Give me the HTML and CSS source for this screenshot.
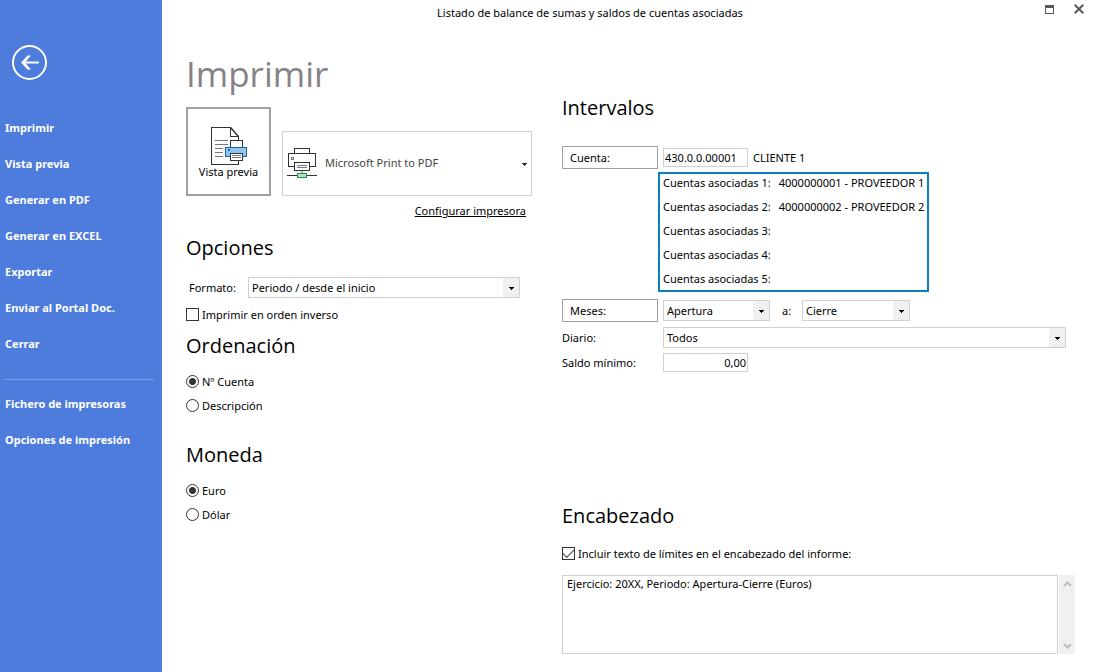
FILE: index.html
```html
<!DOCTYPE html>
<html lang="es">
<head>
<meta charset="utf-8">
<title>Listado de balance de sumas y saldos de cuentas asociadas</title>
<link rel="stylesheet" href="styles.css">
</head>
<body>
<div class="window">
  <aside class="sidebar">
    <button class="back" type="button" aria-label="Volver">
      <svg width="36" height="36" viewBox="0 0 36 36" fill="none" stroke="#fff">
        <circle cx="17.500" cy="17.500" r="16.500" stroke-width="2"/>
        <path d="M10 17.500H27" stroke-width="2"/>
        <path d="M9 17.500L15.500 10.500H19L12.800 17.500L19 24.500H15.500Z" fill="#fff" stroke="none"/>
      </svg>
    </button>
    <nav class="menu">
      <a href="#">Imprimir</a>
      <a href="#">Vista previa</a>
      <a href="#">Generar en PDF</a>
      <a href="#">Generar en EXCEL</a>
      <a href="#">Exportar</a>
      <a href="#">Enviar al Portal Doc.</a>
      <a href="#">Cerrar</a>
      <hr>
      <a href="#">Fichero de impresoras</a>
      <a href="#">Opciones de impresión</a>
    </nav>
  </aside>
  <div class="main">
    <header class="titlebar">
      <span class="title">Listado de balance de sumas y saldos de cuentas asociadas</span>
      <div class="window-buttons">
        <button type="button" aria-label="Maximizar">
          <svg width="9" height="9" viewBox="0 0 9 9" shape-rendering="crispEdges"><path d="M0 0H9V9H0ZM1 3V8H8V3Z" fill="#58585a" fill-rule="evenodd"/></svg>
        </button>
        <button type="button" aria-label="Cerrar ventana">
          <svg width="10" height="10" viewBox="0 0 10 10" fill="none" stroke="#58585a" stroke-width="2"><path d="M.7 .7L9.3 9.3M9.3 .7L.7 9.3"/></svg>
        </button>
      </div>
    </header>
    <main class="content">
      <section class="left">
        <h1>Imprimir</h1>
        <div class="print-row">
          <button class="preview" type="button">
            <svg width="36" height="38" viewBox="0 0 36 38" fill="none" shape-rendering="crispEdges">
              <path d="M27.5 34V37.500H.5V.5H19.500L27.500 9.500V14" fill="#fff"/>
              <path d="M27.500 34V37.500H.5V.5H19.500V9.500H27.500V13" stroke="#333"/>
              <path d="M19.500 .5L27.500 9.500" stroke="#333" stroke-width="1.500" shape-rendering="auto"/>
              <path d="M4 13.5H17M4 17.5H17M4 21.5H12M4 25.5H12M4 29.5H12" stroke="#777"/>
              <path d="M19.5 20V13.5H31.5V20" fill="#fff" stroke="#333"/>
              <path d="M14.5 20.5H35.5V29.5H14.5Z" fill="#8fc5ee" stroke="#1166ae"/>
              <path d="M17 22H19V24H17Z" fill="#1166ae"/>
              <path d="M19.5 26.5H31.5V33.5H19.5Z" fill="#fff" stroke="#333"/>
              <path d="M21 28.5H30M21 30.5H30" stroke="#777"/>
            </svg>
            <span>Vista previa</span>
          </button>
          <div class="printer">
            <svg width="30" height="30" viewBox="0 0 30 30" fill="none" shape-rendering="crispEdges">
              <path d="M7.5 6V.5H22.5V6" stroke="#333"/>
              <path d="M7 18.5H1.5V5.5H28.5V18.5H23" stroke="#333"/>
              <path d="M4.5 9.5H6.5V11.5H4.5Z" stroke="#777"/>
              <path d="M7.5 14.5H22.5V22.5H7.5Z" fill="#fff" stroke="#333"/>
              <path d="M10 17.5H20M10 19.5H20" stroke="#777"/>
              <path d="M15 23V25" stroke="#aaa" stroke-width="2"/>
              <path d="M0 27.5H30" stroke="#333"/>
              <path d="M10.5 25.5H19.5V29.5H10.5Z" fill="#b9dfc0" stroke="#159947"/>
            </svg>
            <select aria-label="Impresora"><option>Microsoft Print to PDF</option></select>
            <svg class="caret" width="5" height="3" viewBox="0 0 5 3" shape-rendering="crispEdges"><path d="M0 0H5V1H4V2H3V3H2V2H1V1H0Z" fill="#333"/></svg>
          </div>
        </div>
        <a class="configure" href="#">Configurar impresora</a>

        <h2>Opciones</h2>
        <div class="format-row">
          <label for="formato">Formato:</label>
          <span class="combo">
            <select id="formato"><option>Periodo / desde el inicio</option></select>
            <svg class="caret" width="5" height="3" viewBox="0 0 5 3" shape-rendering="crispEdges"><path d="M0 0H5V1H4V2H3V3H2V2H1V1H0Z"/></svg>
          </span>
        </div>
        <label class="choice reverse"><input type="checkbox">Imprimir en orden inverso</label>

        <h2>Ordenación</h2>
        <div class="choices" role="radiogroup" aria-label="Ordenación">
          <label class="choice"><input type="radio" name="orden" checked>Nº Cuenta</label>
          <label class="choice"><input type="radio" name="orden">Descripción</label>
        </div>

        <h2 class="spaced">Moneda</h2>
        <div class="choices" role="radiogroup" aria-label="Moneda">
          <label class="choice"><input type="radio" name="moneda" checked>Euro</label>
          <label class="choice"><input type="radio" name="moneda">Dólar</label>
        </div>
      </section>

      <section class="right">
        <h2>Intervalos</h2>
        <div class="row account">
          <button class="field-button" type="button">Cuenta:</button>
          <input class="text" type="text" value="430.0.0.00001" aria-label="Cuenta">
          <span class="client">CLIENTE 1</span>
        </div>
        <dl class="linked">
          <dt>Cuentas asociadas 1:</dt><dd>4000000001 - PROVEEDOR 1</dd>
          <dt>Cuentas asociadas 2:</dt><dd>4000000002 - PROVEEDOR 2</dd>
          <dt>Cuentas asociadas 3:</dt><dd></dd>
          <dt>Cuentas asociadas 4:</dt><dd></dd>
          <dt>Cuentas asociadas 5:</dt><dd></dd>
        </dl>
        <div class="row">
          <button class="field-button" type="button">Meses:</button>
          <span class="combo month">
            <select aria-label="Mes inicial"><option>Apertura</option></select>
            <svg class="caret" width="5" height="3" viewBox="0 0 5 3" shape-rendering="crispEdges"><path d="M0 0H5V1H4V2H3V3H2V2H1V1H0Z"/></svg>
          </span>
          <label class="to" for="mes-final">a:</label>
          <span class="combo month">
            <select id="mes-final"><option>Cierre</option></select>
            <svg class="caret" width="5" height="3" viewBox="0 0 5 3" shape-rendering="crispEdges"><path d="M0 0H5V1H4V2H3V3H2V2H1V1H0Z"/></svg>
          </span>
        </div>
        <div class="row journal">
          <label for="diario">Diario:</label>
          <span class="combo">
            <select id="diario"><option>Todos</option></select>
            <svg class="caret" width="5" height="3" viewBox="0 0 5 3" shape-rendering="crispEdges"><path d="M0 0H5V1H4V2H3V3H2V2H1V1H0Z"/></svg>
          </span>
        </div>
        <div class="row">
          <label for="saldo">Saldo mínimo:</label>
          <input class="text amount" id="saldo" type="text" value="0,00">
        </div>

        <h2 class="heading-title">Encabezado</h2>
        <label class="choice"><input type="checkbox" checked>Incluir texto de límites en el encabezado del informe:</label>
        <div class="memo">
          <textarea aria-label="Texto del encabezado">Ejercicio: 20XX, Periodo: Apertura-Cierre (Euros)</textarea>
          <div class="scroll">
            <svg width="9" height="6" viewBox="0 0 9 6" fill="none" stroke="#bdbdbd" stroke-width="2"><path d="M1 5L4.500 1.500L8 5"/></svg>
            <svg width="9" height="6" viewBox="0 0 9 6" fill="none" stroke="#bdbdbd" stroke-width="2"><path d="M1 1L4.500 4.500L8 1"/></svg>
          </div>
        </div>
      </section>
    </main>
  </div>
</div>
</body>
</html>
```
FILE: styles.css
```css
* { box-sizing: border-box; }

body {
  margin: 0;
  background: #fff;
  color: #000;
  font: 11px/16px "Noto Sans", "Open Sans", sans-serif;
}

button, input, select, textarea {
  margin: 0;
  padding: 0;
  border: 0;
  border-radius: 0;
  background: transparent;
  color: inherit;
  font: inherit;
  outline: 0;
}

h1, h2, dl, dd { margin: 0; font-weight: 400; }

svg { display: block; flex: none; }

.window { display: flex; min-height: 100vh; }

/* Sidebar */
.sidebar {
  flex: none;
  width: 162px;
  padding: 45px 8px 0 4px;
  background: #4d7cdc;
  color: #fff;
}

.back { display: block; margin-left: 8px; }

.menu { display: flex; flex-direction: column; margin-top: 29px; }

.menu a {
  padding-left: 1px;
  color: inherit;
  font-weight: 700;
  line-height: 36px;
  text-decoration: none;
  white-space: nowrap;
}

.menu hr {
  width: 100%;
  height: 1px;
  margin: 17px 0 6px;
  border: 0;
  background: #7b9de5;
}

/* Title bar */
.main { flex: 1; min-width: 0; }

.titlebar { display: flex; height: 26px; }

.title { flex: 1; line-height: 26px; text-align: center; }

.window-buttons {
  display: flex;
  align-items: center;
  justify-content: flex-end;
  gap: 20px;
  width: 76px;
  height: 18px;
  padding-right: 10px;
}

/* Content columns */
.content {
  display: grid;
  grid-template-columns: 346px minmax(0, 1fr);
  gap: 30px;
  padding: 0 19px 18px 24px;
}

h1 {
  height: 81px;
  padding-top: 22px;
  color: #868286;
  font-family: "Open Sans", "Noto Sans", sans-serif;
  font-size: 35px;
  line-height: 52px;
}

h2 {
  font-family: "Open Sans", "Noto Sans", sans-serif;
  font-size: 20px;
  line-height: 28px;
}

.print-row { display: flex; align-items: flex-end; gap: 11px; }

.preview {
  display: flex;
  flex-direction: column;
  align-items: center;
  width: 85px;
  height: 89px;
  padding-top: 18px;
  border: 2px solid #a0a0a0;
}

.preview span { margin-top: -1px; }

.printer {
  position: relative;
  display: flex;
  flex: 1;
  align-items: center;
  gap: 8px;
  height: 65px;
  padding: 0 4px 1px;
  border: 1px solid #d0d0d0;
  color: #444;
}

.printer select { flex: 1; height: 100%; appearance: none; }

.configure {
  display: block;
  margin: 7px 6px 0 0;
  color: inherit;
  text-align: right;
  text-decoration: underline;
}

.left h2 { margin-top: 15px; }

.format-row {
  display: flex;
  align-items: center;
  gap: 12px;
  margin: 15px 12px 0 3px;
}

.format-row label { width: 47px; }

.combo { position: relative; display: flex; flex: 1; height: 21px; }

.combo select {
  width: 100%;
  padding: 0 18px 0 3px;
  border: 1px solid #d0d0d0;
  background: linear-gradient(#f0f0f0, #f0f0f0) right / 16px 100% no-repeat;
  appearance: none;
}

.caret {
  position: absolute;
  top: calc(50% - 1px);
  right: 6px;
  pointer-events: none;
}

.printer .caret { right: 4px; }

.choice { display: flex; align-items: flex-start; gap: 3px; }

.choice input {
  width: 13px;
  height: 13px;
  margin-top: 1px;
  border: 1px solid #333;
  appearance: none;
}

.choice input[type="radio"] { border-radius: 50%; }

.choice input[type="radio"]:checked {
  background: radial-gradient(circle, #333 3px, transparent 4px);
}

.choice input[type="checkbox"]:checked {
  display: grid;
  place-items: center;
}

.choice input[type="checkbox"]:checked::before {
  content: "";
  width: 10px;
  height: 5px;
  margin-bottom: 4px;
  border: solid #444;
  border-width: 0 0 1px 1px;
  transform: rotate(-45deg);
}

.reverse { margin-top: 9px; }

.left .reverse + h2 { margin-top: 9px; }

.choices { display: flex; flex-direction: column; gap: 8px; margin-top: 14px; }

.left .spaced { margin-top: 27px; }

/* Right column */
.right { padding-top: 68px; }

.row { display: flex; align-items: center; gap: 5px; }

.row > label:first-child { width: 96px; }

.account { margin-top: 24px; }

.field-button {
  width: 96px;
  height: 23px;
  padding-left: 7px;
  border: 1px solid #a0a0a0;
  text-align: left;
}

.text {
  width: 85px;
  height: 19px;
  padding: 0 1px;
  border: 1px solid #d0d0d0;
}

.amount { text-align: right; }

.linked {
  display: grid;
  grid-template-columns: max-content max-content;
  grid-auto-rows: 24px;
  column-gap: 8px;
  width: 271px;
  height: 120px;
  margin: 3px 0 7px 96px;
  padding: 0 3px;
  overflow: hidden;
  border: 2px solid #0a7fc6;
  line-height: 18px;
  white-space: nowrap;
}

.month { flex: none; width: 107px; }

.month:last-child { width: 108px; }

.to { width: 17px; margin-left: 5px; padding-left: 2px; }

.journal { margin: 5px 9px 5px 0; }

.heading-title { margin-top: 130px; }

.heading-title + .choice { margin-top: 16px; }

.memo { display: flex; gap: 1px; height: 79px; margin-top: 13px; }

.memo textarea {
  flex: 1;
  min-width: 0;
  padding: 0 4px;
  border: 1px solid #d0d0d0;
  resize: none;
}

.scroll {
  display: flex;
  flex-direction: column;
  align-items: center;
  justify-content: space-between;
  width: 16px;
  padding: 6px 0 5px;
  background: #f0f0f0;
}
```
